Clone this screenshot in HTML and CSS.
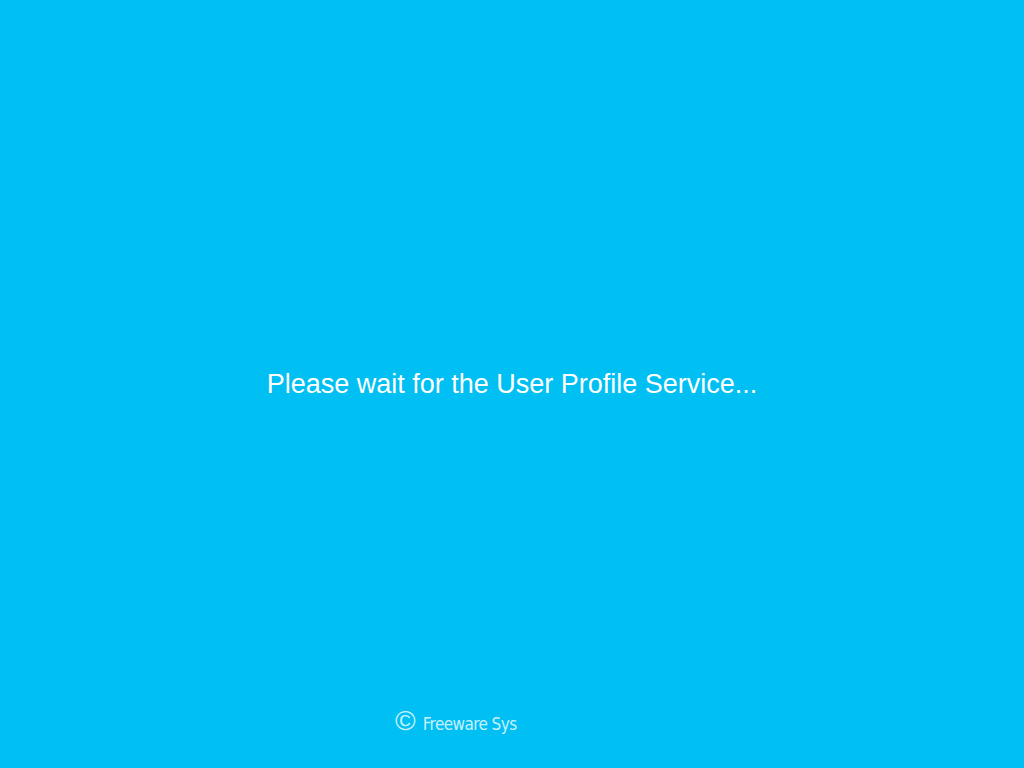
FILE: index.html
```html
<!DOCTYPE html>
<html>
<head>
<meta charset="utf-8">
<link rel="stylesheet" href="styles.css">
</head>
<body>
<div class="screen">
  <div class="message">Please wait for the User Profile Service...</div>
  <div class="footer"><span class="copy">©</span><span class="brand">Freeware Sys</span></div>
</div>
</body>
</html>
```
FILE: styles.css
```css
html, body {
  margin: 0;
  padding: 0;
  background: #00bff3;
}
.screen {
  width: 1024px;
  height: 768px;
  display: flex;
  flex-direction: column;
  background: #00bff3;
  overflow: hidden;
}
.message {
  padding-top: 368px;
  text-align: center;
  color: #ffffff;
  font-family: "Liberation Sans", Arial, sans-serif;
  font-size: 27px;
  line-height: 32px;
  height: 32px;
}
.footer {
  margin-top: auto;
  margin-bottom: 32px;
  padding-left: 395px;
  display: flex;
  align-items: baseline;
  gap: 7px;
  color: #c8f1ff;
  font-family: "DejaVu Sans Condensed", "DejaVu Sans", sans-serif;
}
.copy {
  font-family: "Liberation Sans", Arial, sans-serif;
  font-size: 28px;
  line-height: 24px;
}
.brand {
  font-size: 17px;
  line-height: 24px;
  letter-spacing: -0.6px;
}
```
